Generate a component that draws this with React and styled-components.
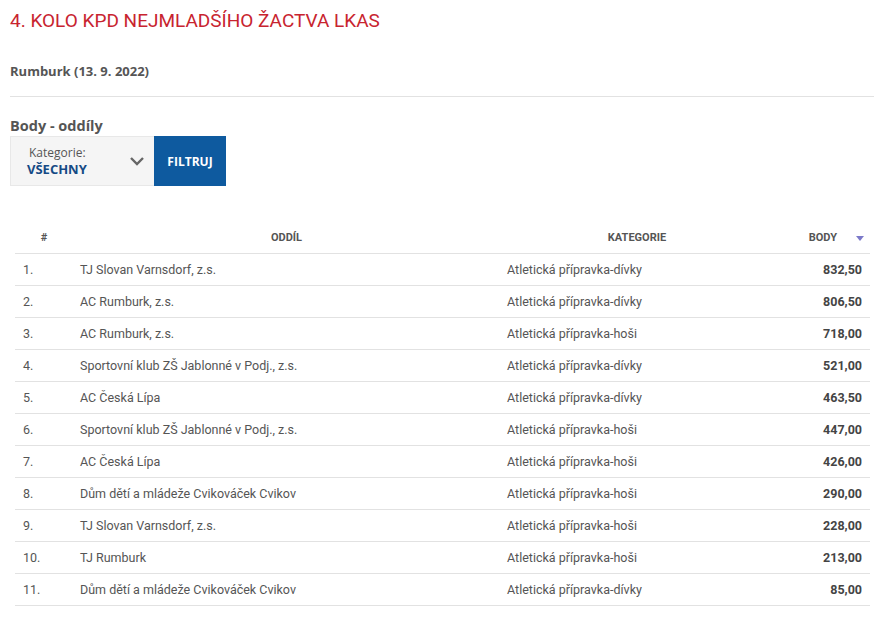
import React from 'react';
import styled, { createGlobalStyle } from 'styled-components';

const GlobalStyle = createGlobalStyle`
  body {
    margin: 0;
    background: #fff;
    font-family: Roboto, "Liberation Sans", sans-serif;
  }
`;

const Page = styled.div`
  padding: 10px 22px 0 10px;
`;

const Title = styled.h1`
  margin: 0;
  font-family: Roboto, sans-serif;
  font-weight: 400;
  font-size: 19px;
  line-height: 22px;
  color: #c8242f;
`;

const Venue = styled.div`
  margin-top: 31px;
  padding-bottom: 16px;
  border-bottom: 1px solid #e2e2e2;
  font-family: "Open Sans", sans-serif;
  font-weight: 700;
  font-size: 13px;
  line-height: 17px;
  color: #555;
`;

const SectionTitle = styled.h2`
  margin: 19px 0 0;
  font-family: "Open Sans", sans-serif;
  font-weight: 700;
  font-size: 14.5px;
  line-height: 19px;
  color: #555;
`;

const FilterBar = styled.div`
  display: flex;
  height: 50px;
  margin-top: 1px;
`;

const Select = styled.div`
  width: 144px;
  box-sizing: border-box;
  background: #f5f5f5;
  border: 1px solid #e8e8e8;
  border-right: none;
  display: flex;
  align-items: center;
  justify-content: space-between;
  padding: 0 9px 0 16px;
  font-family: "Open Sans", sans-serif;
`;

const SelectText = styled.div`
  display: flex;
  flex-direction: column;
  line-height: 16px;
`;

const SelectLabel = styled.span`
  font-size: 12px;
  color: #555;
  padding-left: 2px;
`;

const SelectValue = styled.span`
  font-size: 13px;
  font-weight: 700;
  color: #154a85;
`;

const Button = styled.button`
  width: 72px;
  border: none;
  background: #0e5a9f;
  color: #fff;
  font-family: "Open Sans", sans-serif;
  font-weight: 700;
  font-size: 12px;
  padding: 0;
`;

const Table = styled.table`
  margin: 36px 0 0 5px;
  width: 855px;
  border-collapse: collapse;
  table-layout: fixed;
`;

const Th = styled.th`
  height: 31px;
  padding: 0 ${(p) => (p.$sort ? '33px' : '7px')} 0 7px;
  border-bottom: 1px solid #e2e2e2;
  font-size: 11px;
  font-weight: 700;
  color: #555;
  text-transform: uppercase;
  text-align: ${(p) => p.$align || 'center'};
  position: relative;
`;

const SortArrow = styled.span`
  position: absolute;
  right: 6px;
  top: 14px;
  width: 0;
  height: 0;
  border-left: 4px solid transparent;
  border-right: 4px solid transparent;
  border-top: 5px solid #7b79c9;
`;

const Td = styled.td`
  height: 31px;
  padding: 0 7px 0 7px;
  border-bottom: 1px solid #e2e2e2;
  font-size: 12.5px;
  color: #555;
  text-align: ${(p) => p.$align || 'left'};
  font-weight: ${(p) => (p.$bold ? 700 : 400)};
  ${(p) => p.$bold && 'color: #444; padding-right: 8px;'}
  ${(p) => p.$num && 'padding-left: 8px;'}
`;

const rows = [
  ['TJ Slovan Varnsdorf, z.s.', 'Atletická přípravka-dívky', '832,50'],
  ['AC Rumburk, z.s.', 'Atletická přípravka-dívky', '806,50'],
  ['AC Rumburk, z.s.', 'Atletická přípravka-hoši', '718,00'],
  ['Sportovní klub ZŠ Jablonné v Podj., z.s.', 'Atletická přípravka-dívky', '521,00'],
  ['AC Česká Lípa', 'Atletická přípravka-dívky', '463,50'],
  ['Sportovní klub ZŠ Jablonné v Podj., z.s.', 'Atletická přípravka-hoši', '447,00'],
  ['AC Česká Lípa', 'Atletická přípravka-hoši', '426,00'],
  ['Dům dětí a mládeže Cvikováček Cvikov', 'Atletická přípravka-hoši', '290,00'],
  ['TJ Slovan Varnsdorf, z.s.', 'Atletická přípravka-hoši', '228,00'],
  ['TJ Rumburk', 'Atletická přípravka-hoši', '213,00'],
  ['Dům dětí a mládeže Cvikováček Cvikov', 'Atletická přípravka-dívky', '85,00'],
];

const Chevron = () => (
  <svg width="16" height="10" viewBox="0 0 16 10">
    <path d="M2 2 L8 8 L14 2" fill="none" stroke="#666" strokeWidth="2.4" />
  </svg>
);

export default function App() {
  return (
    <Page>
      <GlobalStyle />
      <Title>4. KOLO KPD NEJMLADŠÍHO ŽACTVA LKAS</Title>
      <Venue>Rumburk (13. 9. 2022)</Venue>
      <SectionTitle>Body - oddíly</SectionTitle>
      <FilterBar>
        <Select>
          <SelectText>
            <SelectLabel>Kategorie:</SelectLabel>
            <SelectValue>VŠECHNY</SelectValue>
          </SelectText>
          <Chevron />
        </Select>
        <Button>FILTRUJ</Button>
      </FilterBar>
      <Table>
        <colgroup>
          <col style={{ width: 58 }} />
          <col style={{ width: 427 }} />
          <col style={{ width: 274 }} />
          <col style={{ width: 96 }} />
        </colgroup>
        <thead>
          <tr>
            <Th>#</Th>
            <Th>Oddíl</Th>
            <Th>Kategorie</Th>
            <Th $align="right" $sort>
              Body
              <SortArrow />
            </Th>
          </tr>
        </thead>
        <tbody>
          {rows.map((r, i) => (
            <tr key={i}>
              <Td $num>{i + 1}.</Td>
              <Td>{r[0]}</Td>
              <Td>{r[1]}</Td>
              <Td $align="right" $bold>{r[2]}</Td>
            </tr>
          ))}
        </tbody>
      </Table>
    </Page>
  );
}
